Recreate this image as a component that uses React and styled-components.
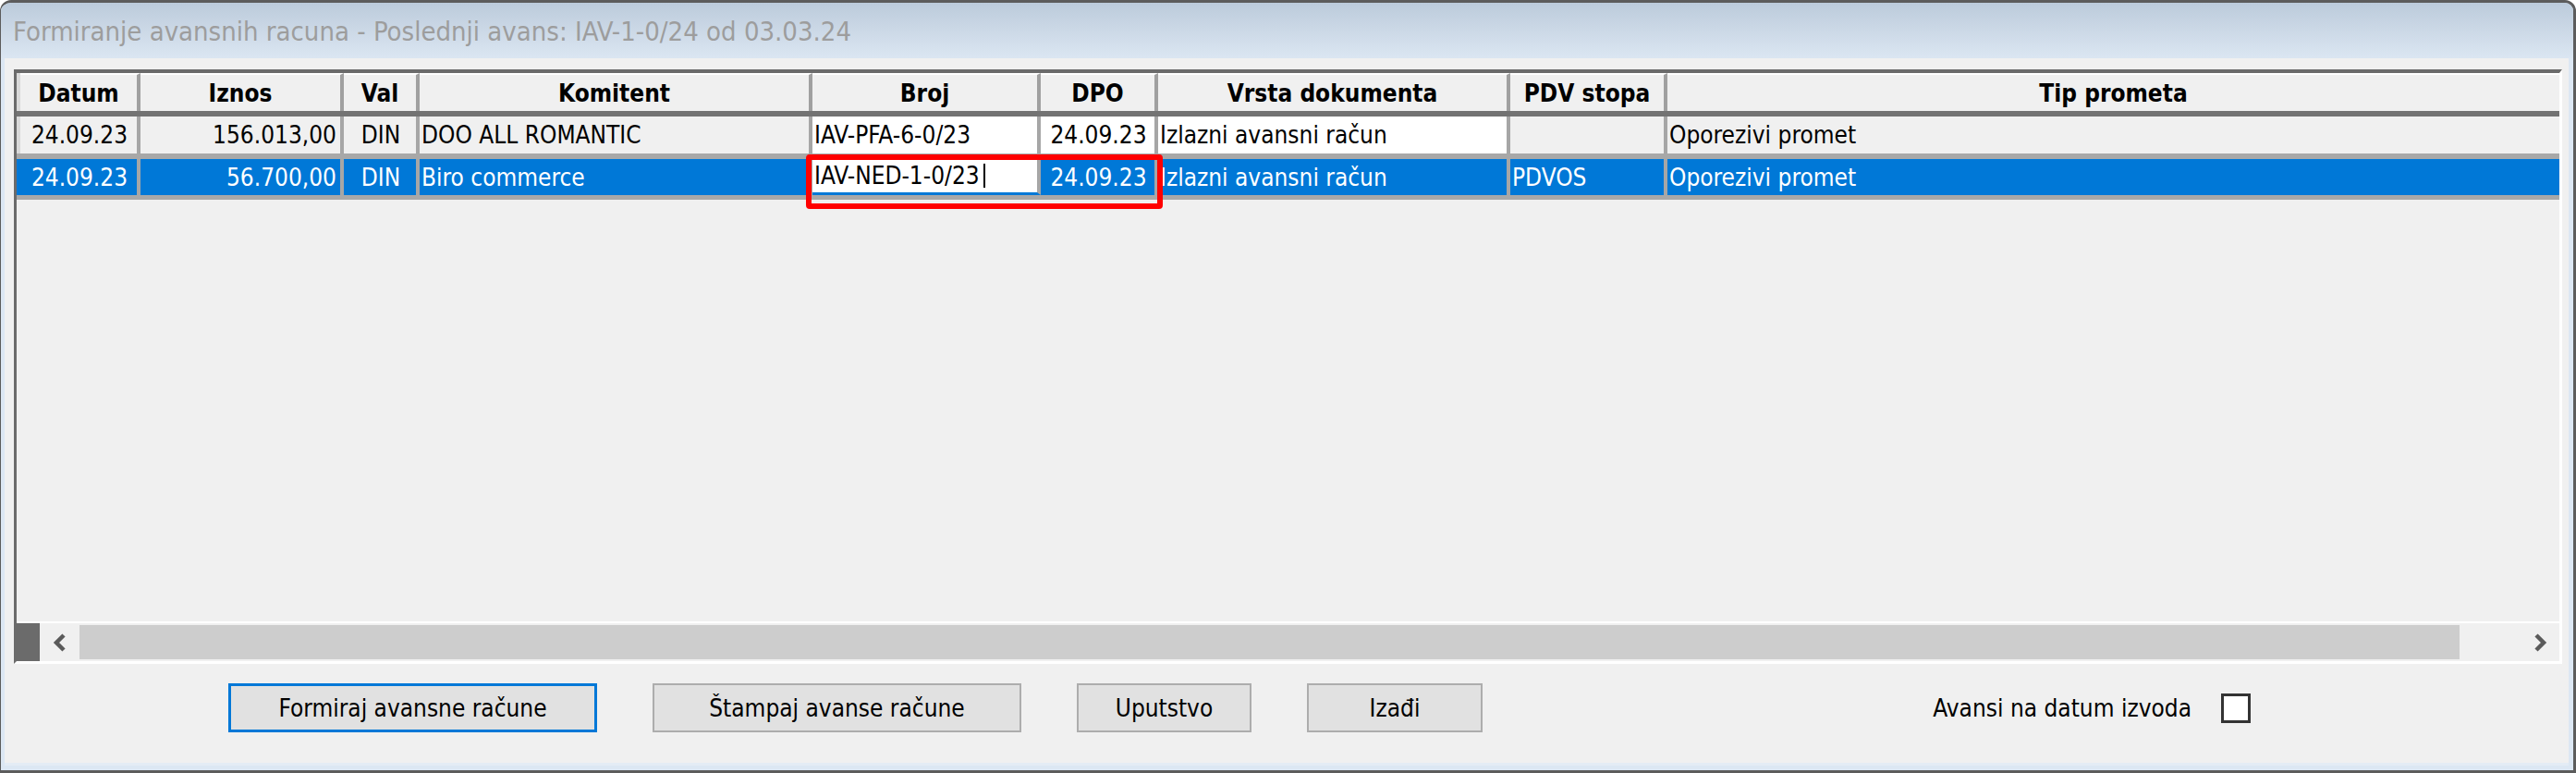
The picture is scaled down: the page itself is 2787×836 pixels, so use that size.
import styled, { createGlobalStyle } from "styled-components";

const GlobalStyle = createGlobalStyle`
  html, body {
    margin: 0;
    padding: 0;
    overflow: hidden;
    background: #ffffff;
  }
  * {
    box-sizing: border-box;
  }
`;

const FONT = `"DejaVu Sans Condensed", "DejaVu Sans", sans-serif`;

const COLUMNS = "4px 130px 220px 82px 425px 247px 127px 381px 170px 1fr";

const Window = styled.div`
  width: 2787px;
  height: 836px;
  display: flex;
  flex-direction: column;
  border: 3px solid #5c5c5c;
  border-left-width: 1px;
  border-radius: 12px 12px 0 0;
  background: #dce7f3;
  overflow: hidden;
  font-family: ${FONT};
  font-stretch: condensed;
`;

const TitleBar = styled.div`
  height: 60px;
  flex: none;
  display: flex;
  align-items: center;
  padding-left: 13px;
  padding-top: 2px;
  background: linear-gradient(#bccbdb, #dbe6f2);
  color: #9d9d9d;
  font-size: 29px;
  white-space: nowrap;
`;

const Client = styled.div`
  flex: 1;
  margin: 0 5px 5px 4px;
  background: #f0f0f0;
  display: flex;
  flex-direction: column;
  padding: 12px 7px 0 10px;
  border-bottom: 3px solid #e4ecf5;
`;

const Grid = styled.div`
  position: relative;
  height: 643px;
  flex: none;
  display: flex;
  flex-direction: column;
  border-top: 4px solid #6b6b6b;
  border-left: 3px solid #6b6b6b;
  border-right: 3px solid #ffffff;
  border-bottom: 3px solid #ffffff;
  background: #f0f0f0;
`;

const Row = styled.div`
  display: grid;
  grid-template-columns: ${COLUMNS};
  height: ${(p) => p.$height}px;
  flex: none;
  border-bottom: ${(p) => p.$sep};
`;

const Indicator = styled.div`
  background: ${(p) => (p.$active ? "#0078d7" : "#d9d9d9")};
`;

const HeadCell = styled.div`
  display: flex;
  align-items: center;
  justify-content: center;
  font-weight: bold;
  font-size: 26px;
  color: #000;
  background: #f0f0f0;
  border-top: 2px solid #ffffff;
  border-right: 4px solid #a0a0a0;
  white-space: nowrap;
  overflow: hidden;
  &:last-child {
    border-right: none;
  }
`;

const Cell = styled.div`
  display: flex;
  align-items: center;
  justify-content: ${(p) =>
    p.$align === "right" ? "flex-end" : p.$align === "center" ? "center" : "flex-start"};
  padding: 0 ${(p) => (p.$align === "right" ? "4px" : "2px")} 0
    ${(p) => (p.$align === "center" ? "4px" : "2px")};
  font-size: 26px;
  white-space: nowrap;
  overflow: hidden;
  color: ${(p) => (p.$selected ? "#ffffff" : "#000000")};
  background: ${(p) => (p.$selected ? "#0078d7" : p.$white ? "#ffffff" : "#f0f0f0")};
  border-right: 4px solid #a6a6a6;
  &:last-child {
    border-right: none;
  }
`;

const EditCell = styled.div`
  display: flex;
  align-items: center;
  padding: 0 2px;
  font-size: 26px;
  white-space: nowrap;
  color: #000;
  background: #ffffff;
  border-bottom: 3px solid #0078d7;
  border-right: 4px solid #a6a6a6;
`;

const Caret = styled.span`
  display: inline-block;
  width: 2px;
  height: 26px;
  margin-left: 4px;
  background: #000;
`;

const Filler = styled.div`
  flex: 1;
`;

const HScroll = styled.div`
  height: 43px;
  flex: none;
  display: flex;
  align-items: stretch;
  border-top: 2px solid #ffffff;
  background: #f0f0f0;
`;

const ScrollCorner = styled.div`
  width: 25px;
  background: #6b6b6b;
`;

const ScrollArrow = styled.div`
  width: 43px;
  display: flex;
  align-items: center;
  justify-content: center;
  color: #606060;
`;

const ScrollTrack = styled.div`
  flex: 1;
  display: flex;
  align-items: center;
  padding: 2px 65px 2px 0;
`;

const Thumb = styled.div`
  height: 100%;
  width: 100%;
  background: #cdcdcd;
`;

const Annotation = styled.div`
  position: absolute;
  left: 854px;
  top: 88px;
  width: 386px;
  height: 59px;
  border: 6px solid #ff0000;
  border-radius: 4px;
  pointer-events: none;
`;

const ButtonBar = styled.div`
  display: flex;
  align-items: center;
  gap: 60px;
  margin-top: 21px;
  padding-left: 232px;
  padding-right: 337px;
`;

const Button = styled.div`
  width: ${(p) => p.$width}px;
  height: 53px;
  display: flex;
  align-items: center;
  justify-content: center;
  font-size: 26px;
  color: #000;
  background: #e1e1e1;
  border: ${(p) => (p.$focused ? "3px solid #0078d7" : "2px solid #adadad")};
  white-space: nowrap;
`;

const CheckGroup = styled.label`
  margin-left: auto;
  display: flex;
  align-items: center;
  gap: 32px;
  font-size: 26px;
  color: #000;
  white-space: nowrap;
`;

const CheckBox = styled.span`
  width: 32px;
  height: 32px;
  border: 3px solid #333333;
  background: #ffffff;
`;

const Chevron = ({ dir }) => (
  <svg width="16" height="20" viewBox="0 0 16 20">
    <path
      d={dir === "left" ? "M12 2 L4 10 L12 18" : "M4 2 L12 10 L4 18"}
      fill="none"
      stroke="#5a5a5a"
      strokeWidth="4.5"
    />
  </svg>
);

const headers = [
  "Datum",
  "Iznos",
  "Val",
  "Komitent",
  "Broj",
  "DPO",
  "Vrsta dokumenta",
  "PDV stopa",
  "Tip prometa",
];

const rows = [
  {
    datum: "24.09.23",
    iznos: "156.013,00",
    val: "DIN",
    komitent: "DOO ALL ROMANTIC",
    broj: "IAV-PFA-6-0/23",
    dpo: "24.09.23",
    vrsta: "Izlazni avansni račun",
    pdv: "",
    tip: "Oporezivi promet",
  },
  {
    datum: "24.09.23",
    iznos: "56.700,00",
    val: "DIN",
    komitent: "Biro commerce",
    broj: "IAV-NED-1-0/23",
    dpo: "24.09.23",
    vrsta: "Izlazni avansni račun",
    pdv: "PDVOS",
    tip: "Oporezivi promet",
    selected: true,
  },
];

export default function App() {
  return (
    <>
      <GlobalStyle />
      <Window>
        <TitleBar>Formiranje avansnih racuna - Poslednji avans: IAV-1-0/24 od 03.03.24</TitleBar>
        <Client>
          <Grid>
            <Row $height={47} $sep="6px solid #737373">
              <Indicator />
              {headers.map((h) => (
                <HeadCell key={h}>{h}</HeadCell>
              ))}
            </Row>
            {rows.map((r, i) => {
              const s = !!r.selected;
              return (
                <Row key={i} $height={i === 0 ? 46 : 44} $sep={`${i === 0 ? 6 : 5}px solid #a8a8a8`}>
                  <Indicator $active={s} />
                  <Cell $align="center" $selected={s}>{r.datum}</Cell>
                  <Cell $align="right" $selected={s}>{r.iznos}</Cell>
                  <Cell $align="center" $selected={s}>{r.val}</Cell>
                  <Cell $selected={s}>{r.komitent}</Cell>
                  {s ? (
                    <EditCell>
                      {r.broj}
                      <Caret />
                    </EditCell>
                  ) : (
                    <Cell $white>{r.broj}</Cell>
                  )}
                  <Cell $align="center" $selected={s} $white>{r.dpo}</Cell>
                  <Cell $selected={s} $white>{r.vrsta}</Cell>
                  <Cell $selected={s}>{r.pdv}</Cell>
                  <Cell $selected={s}>{r.tip}</Cell>
                </Row>
              );
            })}
            <Filler />
            <HScroll>
              <ScrollCorner />
              <ScrollArrow>
                <Chevron dir="left" />
              </ScrollArrow>
              <ScrollTrack>
                <Thumb />
              </ScrollTrack>
              <ScrollArrow>
                <Chevron dir="right" />
              </ScrollArrow>
            </HScroll>
            <Annotation />
          </Grid>
          <ButtonBar>
            <Button $width={399} $focused>Formiraj avansne račune</Button>
            <Button $width={399}>Štampaj avanse račune</Button>
            <Button $width={189}>Uputstvo</Button>
            <Button $width={190}>Izađi</Button>
            <CheckGroup>
              Avansi na datum izvoda
              <CheckBox />
            </CheckGroup>
          </ButtonBar>
        </Client>
      </Window>
    </>
  );
}
